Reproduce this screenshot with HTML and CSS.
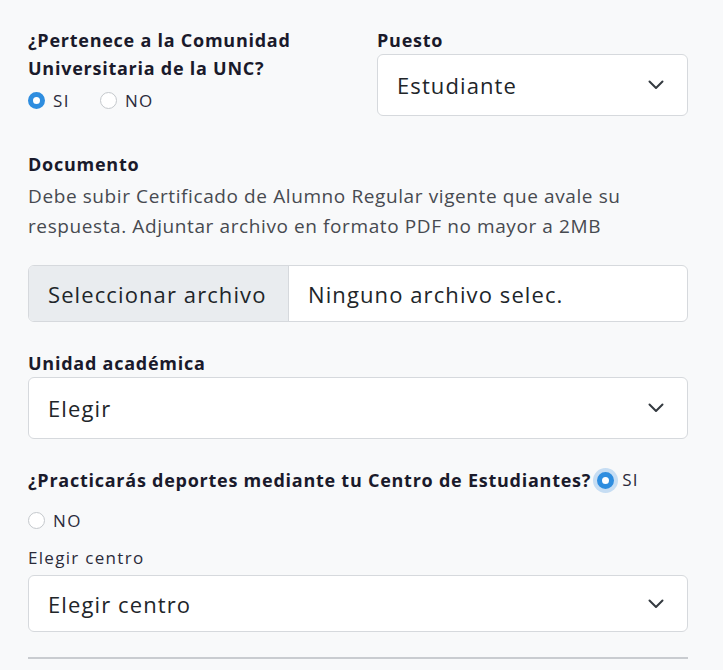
FILE: index.html
```html
<!DOCTYPE html>
<html lang="es">
<head>
    <meta charset="UTF-8">
    <meta name="viewport" content="width=device-width, initial-scale=1.0">
    <title>Inscripción</title>
    <link rel="stylesheet" href="styles.css">
</head>
<body>
    <form class="form">
        <div class="row-top">
            <div class="field">
                <div class="label">¿Pertenece a la Comunidad Universitaria de la UNC?</div>
                <div class="radios">
                    <label class="radio"><span class="dot checked"></span>SI</label>
                    <label class="radio"><span class="dot"></span>NO</label>
                </div>
            </div>
            <div class="field">
                <div class="label">Puesto</div>
                <div class="select">
                    <span>Estudiante</span>
                    <svg class="chevron" width="16" height="10" viewBox="0 0 16 10"><path d="M1.5 1.5 L8 8 L14.5 1.5" fill="none" stroke="#343a40" stroke-width="2" stroke-linecap="round" stroke-linejoin="round"/></svg>
                </div>
            </div>
        </div>

        <div class="section doc">
            <div class="label">Documento</div>
            <p class="help">Debe subir Certificado de Alumno Regular vigente que avale su respuesta. Adjuntar archivo en formato PDF no mayor a 2MB</p>
            <div class="file">
                <span class="file-btn">Seleccionar archivo</span>
                <span class="file-name">Ninguno archivo selec.</span>
            </div>
        </div>

        <div class="section">
            <div class="label">Unidad académica</div>
            <div class="select">
                <span>Elegir</span>
                <svg class="chevron" width="16" height="10" viewBox="0 0 16 10"><path d="M1.5 1.5 L8 8 L14.5 1.5" fill="none" stroke="#343a40" stroke-width="2" stroke-linecap="round" stroke-linejoin="round"/></svg>
            </div>
        </div>

        <div class="section">
            <div class="label inline">¿Practicarás deportes mediante tu Centro de Estudiantes?<label class="radio"><span class="dot checked focus"></span>SI</label></div>
            <div class="radios solo">
                <label class="radio"><span class="dot"></span>NO</label>
            </div>
            <div class="small-label">Elegir centro</div>
            <div class="select short">
                <span>Elegir centro</span>
                <svg class="chevron" width="16" height="10" viewBox="0 0 16 10"><path d="M1.5 1.5 L8 8 L14.5 1.5" fill="none" stroke="#343a40" stroke-width="2" stroke-linecap="round" stroke-linejoin="round"/></svg>
            </div>
        </div>

        <hr class="divider">
    </form>
</body>
</html>
```

FILE: styles.css
```css
body {
    margin: 0;
    background: #f8f9fa;
    font-family: "Open Sans", Arial, sans-serif;
    color: #212529;
}
.form {
    width: 660px;
    margin-left: 28px;
    padding-top: 26px;
}
.row-top {
    display: grid;
    grid-template-columns: 1fr 311px;
    gap: 28px;
}
.label {
    font-size: 18px;
    font-weight: 700;
    line-height: 28px;
    letter-spacing: 0.75px;
    color: #1a1a2b;
}
.label.inline {
    display: flex;
    align-items: center;
}
.label.inline .radio {
    margin-left: 6px;
    font-weight: 400;
}
.radios {
    display: flex;
    gap: 30px;
    height: 36px;
    align-items: center;
}
.radios.solo {
    height: 52px;
}
.radio {
    display: flex;
    align-items: center;
    gap: 8px;
    font-size: 17px;
    letter-spacing: 1.4px;
    color: #2b2b3a;
}
.dot {
    width: 17px;
    height: 17px;
    border-radius: 50%;
    border: 1.5px solid #c4c8cc;
    background: #fff;
    box-sizing: border-box;
}
.dot.checked {
    border: 5px solid #2e8ddf;
}
.dot.focus {
    box-shadow: 0 0 0 4px rgba(46, 141, 223, 0.25);
}
.select {
    height: 62px;
    box-sizing: border-box;
    background: #fff;
    border: 1.5px solid #d6d9dd;
    border-radius: 6px;
    display: flex;
    align-items: center;
    justify-content: space-between;
    padding: 0 23px 0 19px;
    font-size: 22px;
    letter-spacing: 1.1px;
    color: #212529;
}
.select.short {
    height: 57px;
}
.section {
    margin-top: 27px;
}
.doc {
    margin-top: 32px;
}
.help {
    margin: 3px 0 24px;
    font-size: 19px;
    line-height: 30px;
    letter-spacing: 0.6px;
    color: #474a50;
}
.file {
    display: flex;
    height: 57px;
    box-sizing: border-box;
    border: 1.5px solid #d6d9dd;
    border-radius: 6px;
    overflow: hidden;
    background: #fff;
    font-size: 22px;
    letter-spacing: 1.1px;
}
.file-btn {
    width: 260px;
    background: #e9ecef;
    border-right: 1.5px solid #d6d9dd;
    display: flex;
    align-items: center;
    padding-left: 19px;
    box-sizing: border-box;
}
.file-name {
    display: flex;
    align-items: center;
    padding-left: 19px;
}
.small-label {
    font-size: 17px;
    letter-spacing: 1.3px;
    line-height: 24px;
    margin-bottom: 5px;
    color: #2b2b3a;
}
.divider {
    margin: 25px 0 0;
    border: none;
    border-top: 2px solid #c9ccd0;
}
```
